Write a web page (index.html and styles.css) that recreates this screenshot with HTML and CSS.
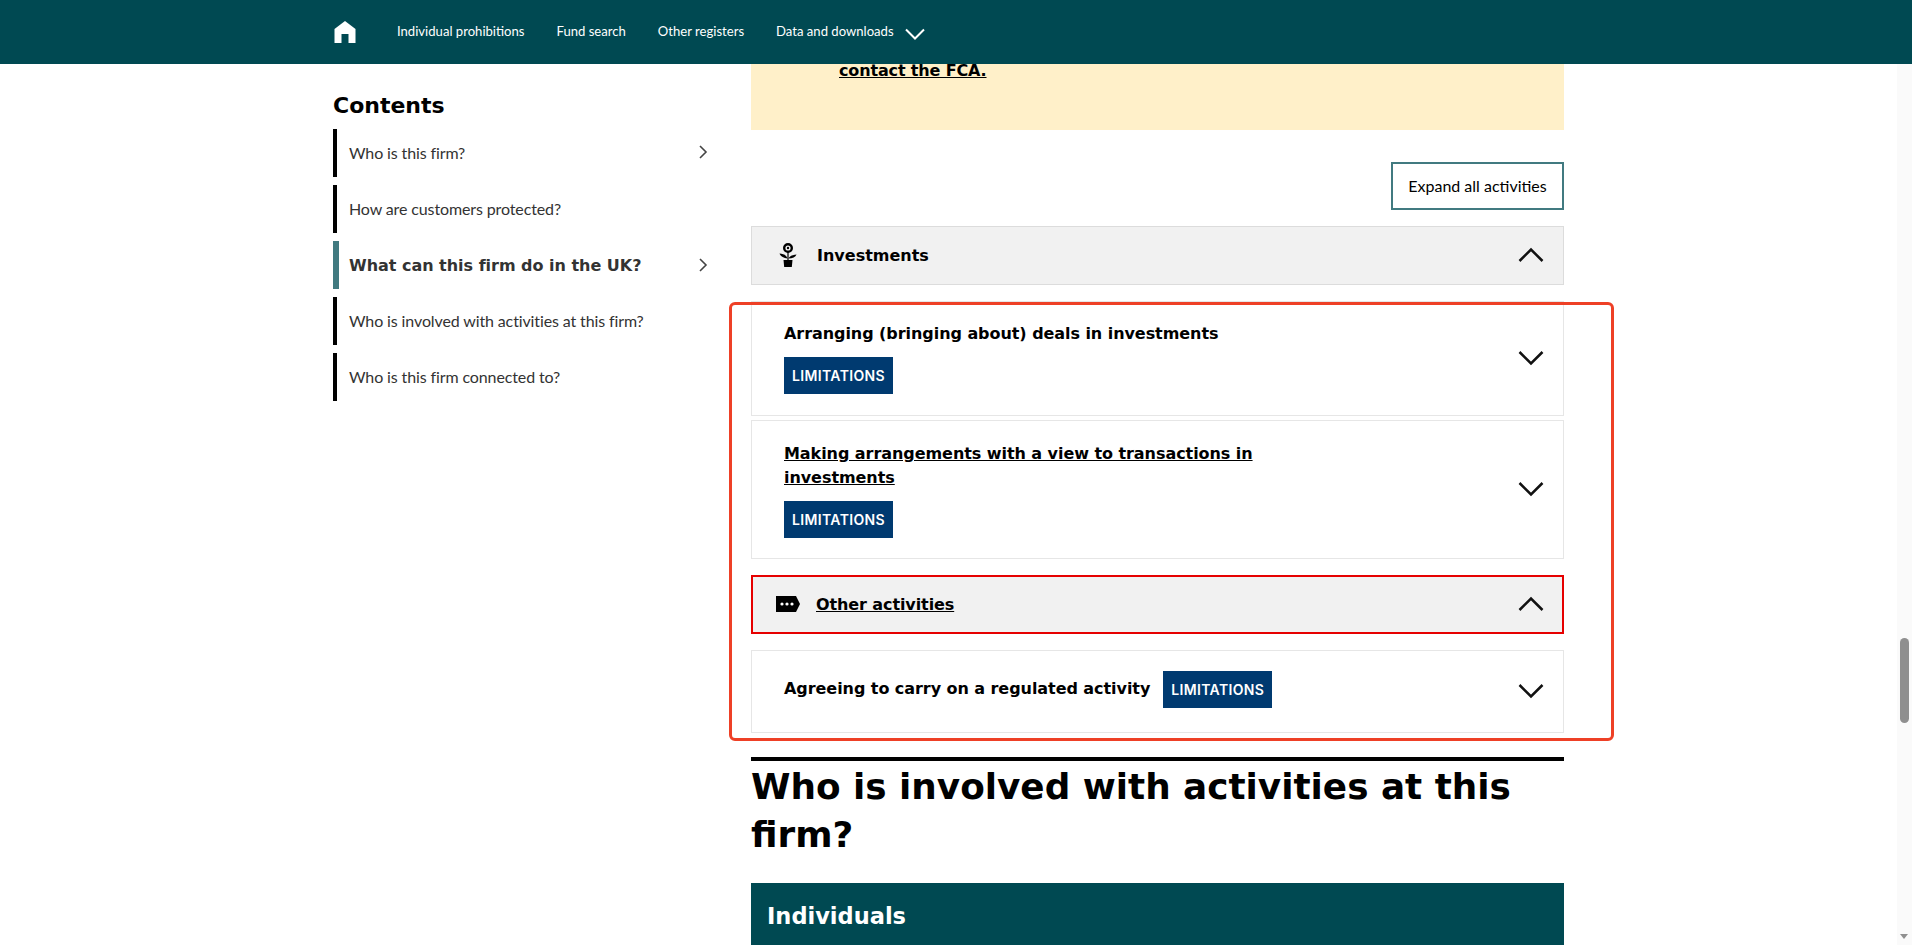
FILE: index.html
```html
<!DOCTYPE html>
<html lang="en">
<head>
<meta charset="utf-8">
<title>Firm details</title>
<link rel="stylesheet" href="styles.css">
</head>
<body>
<div class="page">
  <header class="topbar">
    <nav class="topnav">
      <a class="home" href="#" aria-label="Home">
        <svg width="22" height="22" viewBox="0 0 22 22"><path fill="#fff" d="M11 0 21.500 8V22H14.500V13H7.500V22H.5V8Z"/></svg>
      </a>
      <a href="#">Individual prohibitions</a>
      <a href="#">Fund search</a>
      <a href="#">Other registers</a>
      <a class="with-caret" href="#">Data and downloads
        <svg width="20" height="12" viewBox="0 0 20 12"><path fill="none" stroke="#fff" stroke-width="2" d="M1 1.500 10 10.500 19 1.500"/></svg>
      </a>
    </nav>
  </header>
  <div class="columns">
    <aside class="sidebar">
      <h2 class="contents-title">Contents</h2>
      <ul class="toc">
        <li class="toc-item"><span>Who is this firm?</span>
          <svg class="toc-caret" width="10" height="14" viewBox="0 0 10 14"><path fill="none" stroke="#444" stroke-width="1.600" d="M2 1 8 7 2 13"/></svg></li>
        <li class="toc-item"><span>How are customers protected?</span></li>
        <li class="toc-item active"><span>What can this firm do in the UK?</span>
          <svg class="toc-caret" width="10" height="14" viewBox="0 0 10 14"><path fill="none" stroke="#444" stroke-width="1.600" d="M2 1 8 7 2 13"/></svg></li>
        <li class="toc-item"><span>Who is involved with activities at this firm?</span></li>
        <li class="toc-item"><span>Who is this firm connected to?</span></li>
      </ul>
    </aside>
    <main class="main">
      <div class="notice"><a href="#">contact the FCA.</a></div>
      <div class="actions"><button class="expand" type="button">Expand all activities</button></div>

      <div class="group-head">
        <svg class="group-icon" width="18" height="24" viewBox="0 0 18 24">
          <circle cx="9" cy="5" r="3.800" fill="none" stroke="#000" stroke-width="2.400"/>
          <circle cx="9" cy="5" r="1.200"/>
          <path fill="none" stroke="#000" stroke-width="1.200" d="M9 9V17"/>
          <path d="M8.500 15.500C7 11.500 4 10.800 .5 10.500 1.500 13.500 4.500 15 8.500 15.500Z"/>
          <path d="M9.500 15.500C11 12.500 14 12 17.500 11.500 16.500 14 13.500 15.500 9.500 15.500Z"/>
          <path d="M4.500 17H13.500L12.800 24H5.200Z"/>
        </svg>
        <span class="group-title">Investments</span>
        <svg class="chev" width="26" height="16" viewBox="0 0 26 16"><path fill="none" stroke="#111" stroke-width="2.500" d="M1.500 14 13 2.500 24.500 14"/></svg>
      </div>

      <div class="item item-stack first">
        <div class="item-body">
          <div class="item-title">Arranging (bringing about) deals in investments</div>
          <span class="badge">LIMITATIONS</span>
        </div>
        <svg class="chev" width="26" height="16" viewBox="0 0 26 16"><path fill="none" stroke="#111" stroke-width="2.500" d="M1.500 2 13 13.500 24.500 2"/></svg>
      </div>
      <div class="item item-stack second">
        <div class="item-body">
          <div class="item-title"><a href="#">Making arrangements with a view to transactions in investments</a></div>
          <span class="badge">LIMITATIONS</span>
        </div>
        <svg class="chev" width="26" height="16" viewBox="0 0 26 16"><path fill="none" stroke="#111" stroke-width="2.500" d="M1.500 2 13 13.500 24.500 2"/></svg>
      </div>

      <div class="group-head focused">
        <svg class="group-icon tag" width="24" height="16" viewBox="0 0 24 16">
          <path d="M0 0H20L24 8 20 16H0Z"/>
          <circle cx="6" cy="8" r="1.600" fill="#fff"/><circle cx="11" cy="8" r="1.600" fill="#fff"/><circle cx="16" cy="8" r="1.600" fill="#fff"/>
        </svg>
        <a class="group-title" href="#">Other activities</a>
        <svg class="chev" width="26" height="16" viewBox="0 0 26 16"><path fill="none" stroke="#111" stroke-width="2.500" d="M1.500 14 13 2.500 24.500 14"/></svg>
      </div>

      <div class="item third">
        <div class="item-body inline">
          <div class="item-title">Agreeing to carry on a regulated activity</div>
          <span class="badge">LIMITATIONS</span>
        </div>
        <svg class="chev" width="26" height="16" viewBox="0 0 26 16"><path fill="none" stroke="#111" stroke-width="2.500" d="M1.500 2 13 13.500 24.500 2"/></svg>
      </div>

      <h1 class="section-title">Who is involved with activities at this firm?</h1>
      <div class="panel-head">Individuals</div>

      <div class="annotation" aria-hidden="true"></div>
    </main>
  </div>
  <div class="scrollbar" aria-hidden="true">
    <div class="thumb"></div>
    <div class="arrow"></div>
  </div>
</div>
</body>
</html>
```
FILE: styles.css
```css
* { box-sizing: border-box; }
html, body { margin: 0; height: 100%; overflow: hidden; background: #fff; }
body { font-family: "Lato", sans-serif; color: #000; }
a { color: inherit; }

.page { position: relative; height: 945px; overflow: hidden; }

.topbar { position: relative; z-index: 2; height: 64px; background: #004952; padding-left: 334px; }
.topnav { display: flex; align-items: center; height: 64px; gap: 32px; }
.topnav a { color: #fff; text-decoration: none; font-size: 13.100px; display: flex; align-items: center; padding-bottom: 3px; }
.topnav .home { margin-right: 9px; padding-bottom: 0; }
.home svg { display: block; }
.with-caret { gap: 11px; }
.with-caret svg { margin-top: 6px; }

.columns { display: flex; padding-left: 333px; }
.sidebar { width: 418px; flex: none; padding-top: 28px; }
.contents-title { margin: 0 0 10px; font: bold 22px/27px "DejaVu Sans", sans-serif; }
.toc { list-style: none; margin: 0; padding: 0; width: 375px; display: flex; flex-direction: column; gap: 8px; }
.toc-item { height: 48px; border-left: 4px solid #000; padding: 0 0 2px 12px; display: flex; align-items: center; justify-content: space-between; font-size: 16px; letter-spacing: -0.12px; color: #333; }
.toc-caret { flex: none; }
.toc-item.active { border-left: 6px solid #417a80; padding: 0 0 0 10px; font: bold 16px "DejaVu Sans", sans-serif; letter-spacing: -0.02px; color: #333; }

.main { position: relative; width: 813px; flex: none; }
.notice { height: 66px; background: #fff0c9; padding: 0 0 0 88px; font: bold 16px/14px "DejaVu Sans", sans-serif; letter-spacing: -0.15px; }
.notice a { display: block; }
.actions { display: flex; justify-content: flex-end; margin-top: 32px; }
.expand { width: 173px; height: 48px; border: 2px solid #417a80; background: #fff; color: #000; font: 16px "Lato", sans-serif; padding: 0 0 2px; }

.group-head { display: flex; align-items: center; height: 59px; margin-top: 16px; background: #f1f1f1; border: 1px solid #dcdcdc; position: relative; }
.group-icon { position: absolute; left: 27px; top: 16px; }
.group-icon.tag { left: 23px; top: 19px; }
.group-title { margin-left: 65px; font: bold 16px "DejaVu Sans", sans-serif; color: #000; }
.chev { flex: none; position: absolute; right: 19px; top: 50%; margin-top: -9px; }

.item { position: relative; border: 1px solid #e6e6e6; display: flex; align-items: center; padding-left: 32px; }
.item-stack { display: block; padding-top: 20px; }
.item.first { height: 115px; margin-top: 16px; }
.item.second { height: 139px; margin-top: 4px; padding-top: 21px; }
.item.third { height: 83px; margin-top: 16px; padding-bottom: 5px; }
.item-title { font: bold 16px/24px "DejaVu Sans", sans-serif; letter-spacing: -0.06px; max-width: 480px; }
.item-body.inline { display: flex; align-items: center; gap: 13px; }
.item-body.inline .item-title { max-width: none; }
.badge { display: inline-block; height: 37px; width: 109px; text-align: center; background: #003a70; color: #fff; font: 600 14px/37px "Inter", sans-serif; letter-spacing: 0.35px; }
.item-stack .badge { margin-top: 11px; }
.group-head.focused { border: 2px solid #e60000; margin-top: 16px; }
.focused .group-title { margin-left: 63px; letter-spacing: -0.1px; }
.focused .chev { right: 18px; }

.section-title { margin: 24px 0 0; border-top: 4px solid #000; font: bold 35.800px/48px "DejaVu Sans", sans-serif; padding-top: 2px; }
.panel-head { margin-top: 24px; height: 62px; background: #004952; color: #fff; font: bold 22.500px/66px "DejaVu Sans", sans-serif; padding-left: 16px; }

.annotation { position: absolute; left: -22px; top: 238px; width: 885px; height: 439px; border: 3px solid #ee4026; border-radius: 6px; pointer-events: none; }

.scrollbar { position: absolute; right: 0; top: 0; width: 15px; height: 945px; background: #fafafa; }
.thumb { position: absolute; left: 3px; top: 638px; width: 9px; height: 85px; border-radius: 5px; background: #8f8f8f; }
.arrow { position: absolute; left: 3px; bottom: 6px; width: 0; height: 0; border-left: 4.500px solid transparent; border-right: 4.500px solid transparent; border-top: 5px solid #8f8f8f; }
```
